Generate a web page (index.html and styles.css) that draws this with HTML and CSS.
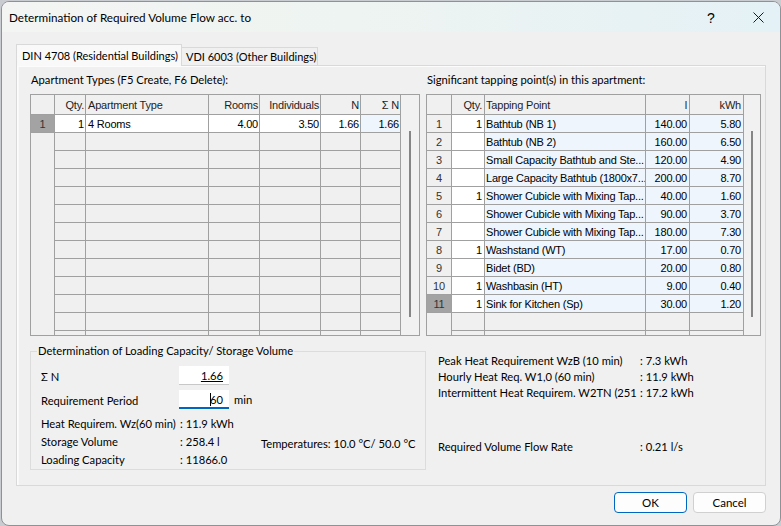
FILE: index.html
```html
<!DOCTYPE html>
<html lang="en">
<head>
    <meta charset="UTF-8">
    <title>Determination of Required Volume Flow acc. to</title>
    <link rel="stylesheet" href="styles.css">
</head>
<body>
<div class="window">
    <div class="titlebar">
        <span class="title">Determination of Required Volume Flow acc. to</span>
        <span class="caption-btn help">?</span>
        <span class="caption-btn close">
            <svg width="11" height="11" viewBox="0 0 11 11"><path d="M0.5 0.5L10.5 10.5M10.5 0.5L0.5 10.5" stroke="#1b1b1b" stroke-width="1" fill="none"/></svg>
        </span>
    </div>

    <div class="dialog-body">
        <div class="tabs">
            <div class="tab active">DIN 4708 (Residential Buildings)</div>
            <div class="tab">VDI 6003 (Other Buildings)</div>
        </div>

        <div class="tab-panel">
            <div class="col-left">
                <div class="caption">Apartment Types (F5 Create, F6 Delete):</div>
                <div class="grid grid-apartments">
                    <table>
                        <tr>
                            <th class="c-rh"></th>
                            <th class="c-qty r">Qty.</th>
                            <th class="c-type">Apartment Type</th>
                            <th class="c-rooms r">Rooms</th>
                            <th class="c-indiv r">Individuals</th>
                            <th class="c-n r">N</th>
                            <th class="c-sn r">Σ N</th>
                        </tr>
                        <tr>
                            <td class="rh sel">1</td>
                            <td class="w r">1</td>
                            <td class="w">4 Rooms</td>
                            <td class="w r">4.00</td>
                            <td class="w r">3.50</td>
                            <td class="w r">1.66</td>
                            <td class="b r">1.66</td>
                        </tr>
                        <tr><td class="rh blank"></td><td></td><td></td><td></td><td></td><td></td><td></td></tr>
                        <tr><td class="rh blank"></td><td></td><td></td><td></td><td></td><td></td><td></td></tr>
                        <tr><td class="rh blank"></td><td></td><td></td><td></td><td></td><td></td><td></td></tr>
                        <tr><td class="rh blank"></td><td></td><td></td><td></td><td></td><td></td><td></td></tr>
                        <tr><td class="rh blank"></td><td></td><td></td><td></td><td></td><td></td><td></td></tr>
                        <tr><td class="rh blank"></td><td></td><td></td><td></td><td></td><td></td><td></td></tr>
                        <tr><td class="rh blank"></td><td></td><td></td><td></td><td></td><td></td><td></td></tr>
                        <tr><td class="rh blank"></td><td></td><td></td><td></td><td></td><td></td><td></td></tr>
                        <tr><td class="rh blank"></td><td></td><td></td><td></td><td></td><td></td><td></td></tr>
                        <tr><td class="rh blank"></td><td></td><td></td><td></td><td></td><td></td><td></td></tr>
                        <tr><td class="rh blank"></td><td></td><td></td><td></td><td></td><td></td><td></td></tr>
                        <tr><td class="rh blank"></td><td></td><td></td><td></td><td></td><td></td><td></td></tr>
                    </table>
                    <div class="vscroll"><div class="thumb"></div></div>
                </div>

                <fieldset class="groupbox">
                    <legend>Determination of Loading Capacity/ Storage Volume</legend>
                    <div class="gb-grid">
                        <div class="gb-label row-input">Σ N</div>
                        <div class="gb-input">
                            <div class="field"><u>1.66</u></div>
                        </div>
                        <div class="gb-label row-input">Requirement Period</div>
                        <div class="gb-input">
                            <div class="field focused"><span class="caret"></span>60</div>
                            <span class="unit">min</span>
                        </div>

                        <div class="gb-label">Heat Requirem. Wz(60 min)</div>
                        <div class="gb-value">: 11.9 kWh</div>
                        <div></div>
                        <div class="gb-label">Storage Volume</div>
                        <div class="gb-value">: 258.4 l</div>
                        <div class="temps">Temperatures: 10.0 °C/ 50.0 °C</div>
                        <div class="gb-label">Loading Capacity</div>
                        <div class="gb-value">: 11866.0</div>
                        <div></div>
                    </div>
                </fieldset>
            </div>

            <div class="col-right">
                <div class="caption">Significant tapping point(s) in this apartment:</div>
                <div class="grid grid-tapping">
                    <table>
                        <tr>
                            <th class="c-rh2"></th>
                            <th class="c-qty2 r">Qty.</th>
                            <th class="c-point">Tapping Point</th>
                            <th class="c-l r">l</th>
                            <th class="c-kwh r">kWh</th>
                        </tr>
                        <tr><td class="rh">1</td><td class="w r">1</td><td class="b">Bathtub (NB 1)</td><td class="b r">140.00</td><td class="b r">5.80</td></tr>
                        <tr><td class="rh">2</td><td class="w r"></td><td class="b">Bathtub (NB 2)</td><td class="b r">160.00</td><td class="b r">6.50</td></tr>
                        <tr><td class="rh">3</td><td class="w r"></td><td class="b">Small Capacity Bathtub and Ste...</td><td class="b r">120.00</td><td class="b r">4.90</td></tr>
                        <tr><td class="rh">4</td><td class="w r"></td><td class="b">Large Capacity Bathtub (1800x7...</td><td class="b r">200.00</td><td class="b r">8.70</td></tr>
                        <tr><td class="rh">5</td><td class="w r">1</td><td class="b">Shower Cubicle with Mixing Tap...</td><td class="b r">40.00</td><td class="b r">1.60</td></tr>
                        <tr><td class="rh">6</td><td class="w r"></td><td class="b">Shower Cubicle with Mixing Tap...</td><td class="b r">90.00</td><td class="b r">3.70</td></tr>
                        <tr><td class="rh">7</td><td class="w r"></td><td class="b">Shower Cubicle with Mixing Tap...</td><td class="b r">180.00</td><td class="b r">7.30</td></tr>
                        <tr><td class="rh">8</td><td class="w r">1</td><td class="b">Washstand (WT)</td><td class="b r">17.00</td><td class="b r">0.70</td></tr>
                        <tr><td class="rh">9</td><td class="w r"></td><td class="b">Bidet (BD)</td><td class="b r">20.00</td><td class="b r">0.80</td></tr>
                        <tr><td class="rh">10</td><td class="w r">1</td><td class="b">Washbasin (HT)</td><td class="b r">9.00</td><td class="b r">0.40</td></tr>
                        <tr><td class="rh sel">11</td><td class="w r">1</td><td class="b">Sink for Kitchen (Sp)</td><td class="b r">30.00</td><td class="b r">1.20</td></tr>
                        <tr><td class="rh blank"></td><td></td><td></td><td></td><td></td></tr>
                        <tr><td class="rh blank"></td><td></td><td></td><td></td><td></td></tr>
                    </table>
                    <div class="vscroll"><div class="thumb"></div></div>
                </div>

                <div class="info">
                    <div class="info-label">Peak Heat Requirement WzB (10 min)</div>
                    <div>: 7.3 kWh</div>
                    <div class="info-label">Hourly Heat Req. W1,0 (60 min)</div>
                    <div>: 11.9 kWh</div>
                    <div class="info-label">Intermittent Heat Requirem. W2TN (251</div>
                    <div>: 17.2 kWh</div>
                    <div class="info-label spaced">Required Volume Flow Rate</div>
                    <div class="spaced">: 0.21 l/s</div>
                </div>
            </div>
        </div>

        <div class="buttons">
            <button class="btn default">OK</button>
            <button class="btn">Cancel</button>
        </div>
    </div>
</div>
</body>
</html>
```

FILE: styles.css
```css
* {
    box-sizing: border-box;
}
html {
    background: #c9cdd2;
}
body {
    margin: 0;
    font-family: Lato, "Liberation Sans", sans-serif;
    font-size: 11.2px;
    color: #000;
}
.window {
    margin: 1px 0 0 1px;
    width: 780px;
    height: 525px;
    border: 1px solid #8e9195;
    border-radius: 8px;
    overflow: hidden;
    background: #f0f0f0;
}

/* title bar */
.titlebar {
    height: 30px;
    display: flex;
    align-items: center;
    background: linear-gradient(90deg, #f3f5f3 0%, #eef4f1 45%, #e4f1f6 100%);
}
.title {
    flex: 1;
    padding-left: 7px;
    font-size: 11.7px;
}
.caption-btn {
    width: 46px;
    height: 30px;
    display: flex;
    align-items: center;
    justify-content: center;
}
.help {
    font-family: "Liberation Sans", sans-serif;
    font-size: 14px;
    padding-top: 1px;
}
.close {
    padding-left: 2px;
}

/* tabs */
.dialog-body {
    padding: 12px 13px 0 14px;
}
.tabs {
    display: flex;
    align-items: flex-end;
    height: 21px;
    font-size: 11px;
}
.tab {
    height: 18px;
    width: 136px;
    padding-left: 4px;
    line-height: 17px;
    border: 1px solid #d9d9d9;
    border-bottom: none;
    border-left: none;
    background: #f0f0f0;
    white-space: nowrap;
    overflow: hidden;
}
.tab.active {
    height: 22px;
    width: 166px;
    padding-left: 5px;
    line-height: 21px;
    border-left: 1px solid #d9d9d9;
    background: #f9f9f9;
    margin-bottom: -1px;
    position: relative;
    z-index: 1;
}
.tab-panel {
    width: 750px;
    height: 421px;
    border: 1px solid #d9d9d9;
    box-shadow: inset 1px 1px 0 #fcfcfc, inset 2px 0 0 #f8f8f8;
    display: flex;
    padding: 6px 0 0 13px;
}
.col-left {
    width: 396px;
}
.col-right {
    width: 335px;
}
.caption {
    height: 16px;
    line-height: 16px;
    margin-bottom: 6px;
    padding-left: 1px;
    white-space: nowrap;
}

/* data grids */
.grid {
    display: flex;
    height: 242px;
    border: 1px solid #a0a0a0;
    overflow: hidden;
}
.grid-apartments {
    width: 390px;
}
.grid-tapping {
    width: 335px;
}
.grid table {
    border-collapse: separate;
    border-spacing: 0;
    table-layout: fixed;
    font-family: "Liberation Sans", Arial, sans-serif;
    font-size: 11px;
    letter-spacing: -0.2px;
}
.grid-apartments table {
    width: 370px;
}
.grid-tapping table {
    width: 317px;
}
.grid th,
.grid td {
    height: 18px;
    padding: 0 1px 0 2px;
    border-right: 1px solid #a0a0a0;
    border-bottom: 1px solid #a0a0a0;
    background: #f0f0f0;
    font-weight: normal;
    text-align: left;
    line-height: 16px;
    white-space: nowrap;
    overflow: hidden;
}
.grid th {
    height: 20px;
    color: #1e1e1e;
}
.grid-tapping th,
.grid-tapping td {
    padding: 0 2px 0 1px;
}
.c-rh { width: 24px; }
.c-qty { width: 31px; }
.c-type { width: 123px; }
.c-rooms { width: 51px; }
.c-indiv { width: 61px; }
.c-n { width: 40px; }
.c-sn { width: 40px; }
.c-rh2 { width: 25px; }
.c-qty2 { width: 33px; }
.c-point { width: 161px; }
.c-l { width: 44px; }
.c-kwh { width: 54px; }

.grid .r {
    text-align: right;
}
.grid .rh {
    text-align: center;
    color: #333;
    padding: 0;
}
.grid .rh.sel {
    background: #a3a3a3;
}
.grid .rh.blank {
    border-bottom: none;
}
.grid .w {
    background: #fff;
}
.grid .b {
    background: #eef5fc;
}
.vscroll {
    flex: 1;
    background: #f1f1f1;
    padding-top: 36px;
}
.grid-apartments .vscroll {
    padding-left: 8px;
}
.grid-tapping .vscroll {
    padding-left: 7px;
}
.thumb {
    width: 2px;
    height: 186px;
    background: #858585;
}

/* loading capacity group */
.groupbox {
    width: 396px;
    height: 127px;
    margin: 7px 0 0;
    padding: 0;
    border: 1px solid #dcdcdc;
}
.groupbox legend {
    margin-left: 6px;
    padding: 0 1px;
    line-height: 16px;
}
.gb-grid {
    display: grid;
    grid-template-columns: 138px 82px auto;
    grid-template-rows: 24px 25px 18px 18px 18px;
    padding: 7px 0 0 10px;
    line-height: 18px;
}
.gb-label {
    white-space: nowrap;
}
.gb-label.row-input {
    line-height: 19px;
    padding-top: 1px;
}
.gb-input {
    grid-column: span 2;
    display: flex;
    align-items: flex-start;
}
.field {
    width: 50px;
    height: 19px;
    background: #fff;
    border-bottom: 1px solid #c8c8c8;
    text-align: right;
    padding-right: 6px;
    line-height: 19px;
}
.field.focused {
    border-bottom: 2px solid #0067c0;
}
.caret {
    display: inline-block;
    width: 1px;
    height: 13px;
    background: #000;
    margin-right: -1px;
    vertical-align: -2px;
}
.unit {
    margin-left: 5px;
    line-height: 20px;
}
.gb-value {
    padding-left: 1px;
    white-space: nowrap;
}
.temps {
    padding-top: 2px;
    white-space: nowrap;
}

/* results on the right */
.info {
    display: grid;
    grid-template-columns: 202px auto;
    margin-top: 17px;
    padding-left: 12px;
    line-height: 16px;
}
.info-label {
    width: 199px;
    overflow: hidden;
    white-space: nowrap;
}
.info .spaced {
    margin-top: 38px;
}

/* buttons */
.buttons {
    display: flex;
    justify-content: flex-end;
    gap: 6px;
    margin-top: 6px;
    padding-right: 1px;
}
.btn {
    width: 73px;
    height: 21px;
    padding: 0;
    border: 1px solid #d0d0d0;
    border-radius: 4px;
    background: #fdfdfd;
    font-family: Lato, "Liberation Sans", sans-serif;
    font-size: 11.5px;
    color: #000;
}
.btn.default {
    border-color: #0067c0;
}
```
